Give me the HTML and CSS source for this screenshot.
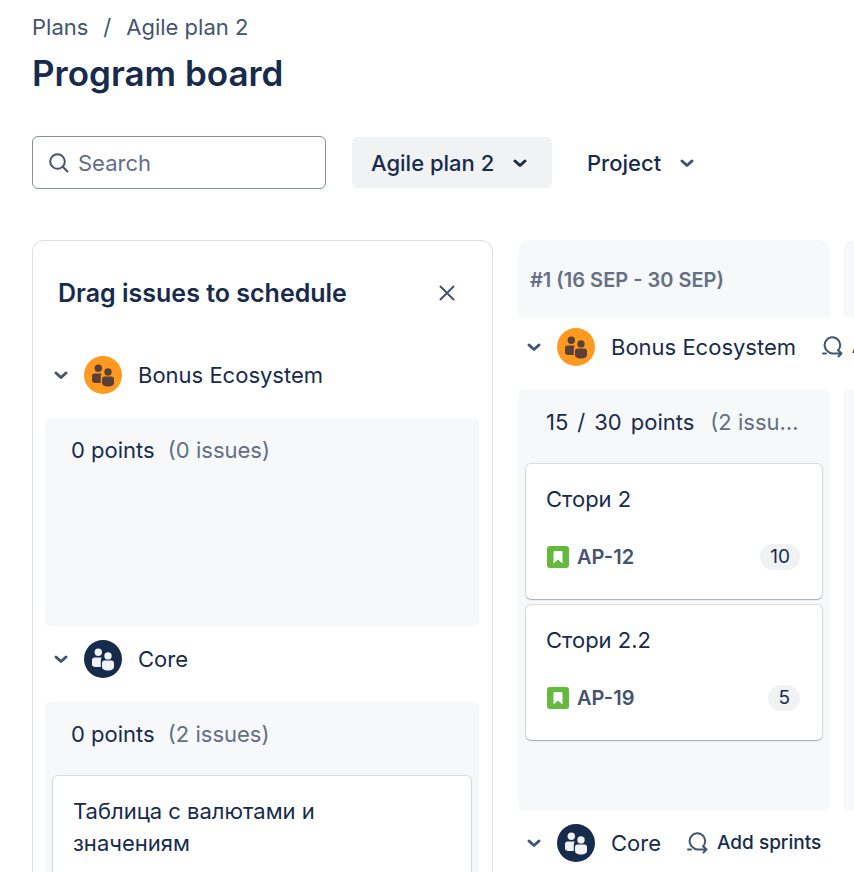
FILE: index.html
```html
<!DOCTYPE html>
<html lang="en">
<head>
   <meta charset="UTF-8">
   <meta name="viewport" content="width=device-width, initial-scale=1.0">
   <title>Program board - Agile plan 2</title>
   <link rel="stylesheet" href="styles.css">
</head>
<body>

   <!-- Shared icons -->
   <svg class="sprite" aria-hidden="true">
      <symbol id="chevron" viewBox="0 0 24 24">
         <path d="M7 10l5 4.500 5-4.500" fill="none" stroke="currentColor" stroke-width="3" stroke-linecap="round" stroke-linejoin="round"/>
      </symbol>
      <symbol id="people" viewBox="0 0 38 38">
         <circle cx="14.3" cy="12.2" r="3.7"/>
         <path d="M10.5 17.5h7.2c-.6 1-.9 2-.9 3.200v6.300h-5.300c-2.200 0-3.500-1-3.500-2.500v-4.500c0-1.500 1-2.500 2.500-2.500z"/>
         <circle cx="24" cy="15.900" r="3.700"/>
         <path d="M20.500 20.500h7c1.500 0 2.500 1 2.500 2.500v4c0 2.200-2.500 3.500-6 3.500s-6-1.300-6-3.500v-4c0-1.500 1-2.500 2.500-2.500z"/>
      </symbol>
      <symbol id="sprint" viewBox="0 0 22 22">
         <path d="M1 17.500H4M6 15.500A7.800 7.800 0 1 1 16 14.500M6 15.500C7.500 17 8.500 17.500 10.500 17.500H19.500M16.500 14.500l3 3-3 3" fill="none" stroke="currentColor" stroke-width="2" stroke-linecap="round" stroke-linejoin="round"/>
      </symbol>
      <symbol id="story" viewBox="0 0 22 22">
         <rect width="22" height="22" rx="3" fill="#63ba3c"/>
         <path d="M6.500 6.200c0-.8.500-1.200 1.200-1.200h6.600c.7 0 1.200.4 1.200 1.200V17.500L11 13.500l-4.500 4z" fill="#fff"/>
      </symbol>
   </svg>

   <header class="page-header">
      <nav class="breadcrumbs" aria-label="Breadcrumbs">
         <a href="#">Plans</a>
         <span>/</span>
         <a href="#">Agile plan 2</a>
      </nav>
      <h1>Program board</h1>
   </header>

   <div class="filters">
      <label class="search">
         <svg class="search-icon" viewBox="0 0 22 22" aria-hidden="true">
            <path d="M14.500 14.500l5 5M16.800 9.500a7.300 7.300 0 1 1-14.600 0 7.300 7.300 0 0 1 14.600 0z" fill="none" stroke="currentColor" stroke-width="2" stroke-linecap="round"/>
         </svg>
         <input type="search" placeholder="Search" aria-label="Search">
      </label>
      <label class="filter filter-active">
         <select aria-label="Plan">
            <option>Agile plan 2</option>
         </select>
         <svg class="chevron" aria-hidden="true"><use href="#chevron"/></svg>
      </label>
      <label class="filter">
         <select aria-label="Project">
            <option>Project</option>
         </select>
         <svg class="chevron" aria-hidden="true"><use href="#chevron"/></svg>
      </label>
   </div>

   <main class="content">

      <aside class="panel">
         <div class="panel-header">
            <h2>Drag issues to schedule</h2>
            <button class="icon-btn" aria-label="Close">
               <svg class="close-icon" viewBox="0 0 24 24" aria-hidden="true">
                  <path d="M5.500 5.500l13 13M18.500 5.500l-13 13" fill="none" stroke="currentColor" stroke-width="2" stroke-linecap="round"/>
               </svg>
            </button>
         </div>

         <div class="team">
            <button class="icon-btn" aria-label="Collapse Bonus Ecosystem"><svg class="chevron"><use href="#chevron"/></svg></button>
            <svg class="avatar avatar-orange" aria-hidden="true"><use href="#people"/></svg>
            <span class="team-name">Bonus Ecosystem</span>
         </div>
         <div class="lane">
            <p class="points">0 points <span class="muted">(0 issues)</span></p>
         </div>

         <div class="team">
            <button class="icon-btn" aria-label="Collapse Core"><svg class="chevron"><use href="#chevron"/></svg></button>
            <svg class="avatar avatar-navy" aria-hidden="true"><use href="#people"/></svg>
            <span class="team-name">Core</span>
         </div>
         <div class="lane">
            <p class="points">0 points <span class="muted">(2 issues)</span></p>
            <article class="card">
               <h3>Таблица с валютами и<br>значениям</h3>
            </article>
         </div>
      </aside>

      <section class="board">
         <div class="columns">
            <div class="column-head">#1 (16 SEP - 30 SEP)</div>
            <div class="column-head"></div>
         </div>

         <div class="team team-first">
            <button class="icon-btn" aria-label="Collapse Bonus Ecosystem"><svg class="chevron"><use href="#chevron"/></svg></button>
            <svg class="avatar avatar-orange" aria-hidden="true"><use href="#people"/></svg>
            <span class="team-name">Bonus Ecosystem</span>
            <button class="add-btn"><svg class="sprint-icon" aria-hidden="true"><use href="#sprint"/></svg>Add sprints</button>
         </div>

         <div class="columns">
            <div class="lane">
               <p class="points"><span>15</span><span>/</span><span>30</span><span>points</span><span class="muted">(2 issues)</span></p>
               <article class="card">
                  <h3>Стори 2</h3>
                  <div class="card-footer">
                     <svg class="story-icon" aria-hidden="true"><use href="#story"/></svg>
                     <a href="#">AP-12</a>
                     <span class="badge">10</span>
                  </div>
               </article>
               <article class="card">
                  <h3>Стори 2.2</h3>
                  <div class="card-footer">
                     <svg class="story-icon" aria-hidden="true"><use href="#story"/></svg>
                     <a href="#">AP-19</a>
                     <span class="badge">5</span>
                  </div>
               </article>
            </div>
            <div class="lane"></div>
         </div>

         <div class="team">
            <button class="icon-btn" aria-label="Collapse Core"><svg class="chevron"><use href="#chevron"/></svg></button>
            <svg class="avatar avatar-navy" aria-hidden="true"><use href="#people"/></svg>
            <span class="team-name">Core</span>
            <button class="add-btn"><svg class="sprint-icon" aria-hidden="true"><use href="#sprint"/></svg>Add sprints</button>
         </div>
      </section>

   </main>

</body>
</html>
```
FILE: styles.css
```css
* {
   box-sizing: border-box;
}
body {
   display: flex;
   flex-direction: column;
   height: 100vh;
   margin: 0;
   padding: 11px 0 0 32px;
   overflow: hidden;
   background-color: #fff;
   color: #172b4d;
   font-family: Inter, 'Liberation Sans', sans-serif;
   font-size: 22px;
   line-height: 32px;
}
h1, h2, h3, p {
   margin: 0;
}
a {
   color: #44546f;
   text-decoration: none;
}
a:hover {
   text-decoration: underline;
}
button, input, select {
   padding: 0;
   border: 0;
   background: none;
   color: inherit;
   font: inherit;
}
button {
   cursor: pointer;
}
svg {
   display: block;
   flex: none;
}
.sprite {
   position: absolute;
   width: 0;
   height: 0;
}

/* Header */
.breadcrumbs {
   display: flex;
   gap: 15px;
   color: #44546f;
}
h1 {
   margin-top: 9px;
   font-size: 35px;
   font-weight: 600;
   line-height: 42px;
}

/* Filters */
.filters {
   display: flex;
   align-items: center;
   margin-top: 42px;
}
.search {
   display: flex;
   align-items: center;
   gap: 8px;
   width: 294px;
   height: 53px;
   margin-right: 26px;
   padding: 0 15px;
   border: 1px solid #8590a2;
   border-radius: 6px;
   color: #44546f;
}
.search input {
   flex: 1;
   min-width: 0;
   outline: 0;
}
.search input::placeholder {
   color: #626f86;
   opacity: 1;
}
.search-icon {
   width: 22px;
   height: 22px;
}
.filter {
   display: flex;
   align-items: center;
   gap: 13px;
   height: 51px;
   padding: 0 20px 0 19px;
   border-radius: 5px;
   font-weight: 500;
}
.filter + .filter {
   margin-left: 16px;
}
.filter-active {
   background-color: #f1f2f4;
}
.filter select {
   appearance: none;
}
.chevron {
   width: 24px;
   height: 24px;
   color: #44546f;
}
.filter-active .chevron {
   color: #172b4d;
}

/* Content */
.content {
   display: grid;
   flex: 1;
   grid-template-columns: minmax(320px, 461px) minmax(0, 1fr);
   gap: 25px;
   min-height: 0;
   margin-top: 51px;
}
.panel {
   padding: 0 13px 0 12px;
   overflow: hidden;
   border: 1px solid #dcdfe4;
   border-bottom: 0;
   border-radius: 12px 12px 0 0;
}
.panel-header {
   display: flex;
   align-items: center;
   justify-content: space-between;
   padding: 36px 20px 33px 13px;
}
h2 {
   font-size: 25px;
   font-weight: 600;
   line-height: 32px;
}
.close-icon {
   width: 24px;
   height: 24px;
   color: #44546f;
}
.team {
   display: flex;
   align-items: center;
   height: 76px;
   padding: 0 0 10px 4px;
   white-space: nowrap;
}
.team-first {
   height: 73px;
   padding-bottom: 13px;
}
.avatar {
   width: 38px;
   height: 38px;
   margin: 0 16px 0 11px;
   border-radius: 50%;
}
.avatar-orange {
   background-color: #ff991f;
   fill: #5b4037;
}
.avatar-navy {
   background-color: #172b4d;
   fill: #f1f2f4;
}
.lane {
   min-height: 208px;
   padding: 16px 8px;
   border-radius: 5px;
   background-color: #f7f8f9;
}
.points {
   margin-bottom: 26px;
   padding: 0 18px;
}
.muted {
   margin-left: 7px;
   color: #626f86;
}
.card {
   padding: 19px 22px 28px 20px;
   border-radius: 5px;
   background-color: #fff;
   box-shadow: 0 1px 1px #091e4240, 0 0 1px 1px #091e4221;
}
.card + .card {
   margin-top: 6px;
}
h3 {
   font-size: 22px;
   font-weight: 400;
}
.card-footer {
   display: flex;
   align-items: center;
   height: 28px;
   margin-top: 28px;
   font-size: 19px;
}
.card-footer a {
   margin-left: 8px;
   font-size: 20px;
   font-weight: 600;
}
.story-icon {
   width: 22px;
   height: 22px;
   margin-left: 1px;
}
.badge {
   margin-left: auto;
   padding: 0 10px;
   border-radius: 13px;
   background-color: #f1f2f4;
   line-height: 26px;
}

/* Board */
.board {
   overflow: hidden;
}
.columns {
   display: grid;
   grid-auto-columns: 312px;
   grid-auto-flow: column;
   gap: 13px;
}
.column-head {
   height: 77px;
   padding: 24px 12px;
   border-radius: 12px 12px 0 0;
   background-color: #f7f8f9;
   color: #626f86;
   font-size: 20px;
   font-weight: 600;
}
.board .lane {
   min-height: 420px;
}
.board .points {
   display: flex;
   gap: 9px;
   padding: 0 20px;
}
.board .muted {
   min-width: 0;
   overflow: hidden;
   text-overflow: ellipsis;
   white-space: nowrap;
}
.add-btn {
   display: flex;
   align-items: center;
   gap: 8px;
   margin-left: 26px;
   font-size: 19px;
   font-weight: 500;
}
.sprint-icon {
   width: 22px;
   height: 22px;
   color: #44546f;
}
```
